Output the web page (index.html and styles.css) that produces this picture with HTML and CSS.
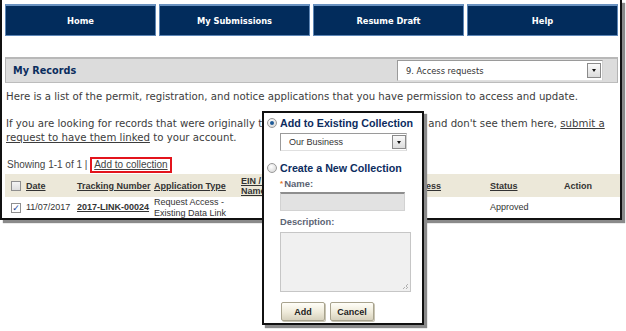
FILE: index.html
```html
<!DOCTYPE html>
<html>
<head>
<meta charset="utf-8">
<link rel="stylesheet" href="styles.css">
</head>
<body>
<div class="frame">
  <nav class="nav">
    <a class="navbtn">Home</a>
    <a class="navbtn">My Submissions</a>
    <a class="navbtn">Resume Draft</a>
    <a class="navbtn">Help</a>
  </nav>
  <div class="bar">
    <h2 class="bar-title">My Records</h2>
    <div class="select select-wide"><span class="select-text">9. Access requests</span><span class="select-arrow"><span class="tri"></span></span></div>
  </div>
  <p class="intro">Here is a list of the permit, registration, and notice applications that you have permission to access and update.</p>
  <p class="intro">If you are looking for records that were originally transferred from another owners and don't see them here, <a class="ulink">submit a</a><br><a class="ulink">request to have them linked</a> to your account.</p>
  <div class="showing">Showing 1-1 of 1 | <a class="hl">Add to collection</a></div>
  <table class="records">
    <colgroup>
      <col class="c-cb"><col class="c-date"><col class="c-track"><col class="c-app"><col class="c-ein"><col class="c-fac"><col class="c-addr"><col class="c-status"><col class="c-action">
    </colgroup>
    <thead>
      <tr>
        <th><span class="cb"></span></th>
        <th><u>Date</u></th>
        <th><u>Tracking Number</u></th>
        <th><u>Application Type</u></th>
        <th><u>EIN / Facility<br>Name</u></th>
        <th><u>Facility</u></th>
        <th><u>Address</u></th>
        <th><u>Status</u></th>
        <th>Action</th>
      </tr>
    </thead>
    <tbody>
      <tr>
        <td><span class="cb checked">&#10003;</span></td>
        <td>11/07/2017</td>
        <td><b><u>2017-LINK-00024</u></b></td>
        <td>Request Access -<br>Existing Data Link</td>
        <td></td>
        <td></td>
        <td></td>
        <td>Approved</td>
        <td></td>
      </tr>
    </tbody>
  </table>
</div>

<div class="popup">
  <div class="prow"><span class="radio on"></span><span class="plabel">Add to Existing Collection</span></div>
  <div class="select select-pop"><span class="select-text">Our Business</span><span class="select-arrow"><span class="tri"></span></span></div>
  <div class="prow prow2"><span class="radio"></span><span class="plabel">Create a New Collection</span></div>
  <div class="flabel flabel-name"><span class="req">*</span>Name:</div>
  <div class="input"></div>
  <div class="flabel flabel-desc">Description:</div>
  <div class="textarea"><span class="grip"></span></div>
  <div class="btns">
    <span class="btn">Add</span>
    <span class="btn">Cancel</span>
  </div>
</div>
</body>
</html>
```
FILE: styles.css
```css
html, body {
  margin: 0;
  padding: 0;
  background: #fff;
}
body {
  width: 626px;
  height: 331px;
  overflow: hidden;
  position: relative;
}
.frame {
  width: 618px;
  height: 218px;
  border: 2px solid #111;
  border-top: none;
  box-shadow: 3px 3px 1px #8a8a8a;
  overflow: hidden;
  font-family: "DejaVu Sans", Verdana, sans-serif;
  color: #444;
}
.nav {
  display: grid;
  grid-template-columns: repeat(4, 151px);
  column-gap: 3px;
  padding: 4px 0 0 3px;
}
.navbtn {
  height: 29px;
  background: #022c5c;
  border: 1px solid #5d86b6;
  border-top: 2px solid #6a92c0;
  color: #fff;
  font-weight: bold;
  font-size: 8.3px;
  display: flex;
  align-items: center;
  justify-content: center;
  box-sizing: content-box;
}
.bar {
  margin: 21px 2px 0 3px;
  height: 23px;
  background: #dcdcdc;
  border: 1px solid #b4b4b4;
  border-top: 2px solid #b8b8b8;
  border-bottom: 1px solid #bcbcbc;
  display: flex;
  align-items: center;
  justify-content: space-between;
  padding: 0 14px 0 7px;
}
.bar-title {
  margin: 0;
  font-size: 9.7px;
  font-weight: bold;
  color: #0b2d5d;
}
.select {
  display: flex;
  align-items: stretch;
  background: #fff;
  border: 1px solid #9a9a9a;
  border-right-color: #d0d0d0;
  border-bottom-color: #e0e0e0;
  box-sizing: border-box;
}
.select-wide {
  width: 206px;
  height: 21px;
}
.select-text {
  flex: 1;
  display: flex;
  align-items: center;
  padding-left: 8px;
  color: #333;
}
.select-wide .select-text {
  font-size: 8.3px;
}
.select-arrow {
  width: 12px;
  margin: 2px 1px 2px 0;
  border: 1px solid #8a8a8a;
  background: linear-gradient(#fafafa, #dcdcdc);
  display: flex;
  align-items: center;
  justify-content: center;
}
.tri {
  width: 0;
  height: 0;
  border-left: 2.5px solid transparent;
  border-right: 2.5px solid transparent;
  border-top: 3px solid #111;
}
.intro {
  margin: 7px 0 0 4px;
  font-size: 10.2px;
  line-height: 14px;
  white-space: nowrap;
  color: #3c3c3c;
}
.intro + .intro {
  margin-top: 13px;
}
.ulink {
  text-decoration: underline;
  color: #3c3c3c;
}
.showing {
  margin: 12px 0 0 5px;
  height: 16px;
  font-family: "Liberation Sans", Arial, sans-serif;
  font-size: 10px;
  line-height: 16px;
  color: #444;
  display: flex;
  align-items: center;
  white-space: pre;
}
.hl {
  display: inline-block;
  border: 2px solid #e3141c;
  padding: 0 2px;
  height: 12px;
  line-height: 12px;
  text-decoration: underline;
  color: #444;
}
.records {
  margin: 1px 0 0 3px;
  width: 615px;
  border-collapse: collapse;
  table-layout: fixed;
  font-family: "Liberation Sans", Arial, sans-serif;
  font-size: 9px;
  color: #333;
}
.c-cb { width: 19px; }
.c-date { width: 51px; }
.c-track { width: 77px; }
.c-app { width: 87px; }
.c-ein { width: 83px; }
.c-fac { width: 81px; }
.c-addr { width: 85px; }
.c-status { width: 74px; }
.c-action { width: 58px; }
.records th {
  background: #ece8d9;
  height: 23px;
  padding: 0 2px;
  text-align: left;
  font-weight: bold;
  line-height: 10px;
  vertical-align: middle;
  color: #333;
  white-space: nowrap;
  overflow: hidden;
}
.records th:first-child, .records td:first-child {
  padding: 0 0 0 6px;
}
.records td {
  height: 21px;
  padding: 0 2px;
  line-height: 10.5px;
  vertical-align: middle;
  white-space: nowrap;
}
.cb {
  display: block;
  width: 8px;
  height: 8px;
  border: 1px solid #8f8f8f;
  background: linear-gradient(#f4f4f4, #dedede);
  font-size: 9px;
  line-height: 8px;
  color: #1d3f93;
  text-align: center;
  font-weight: bold;
  font-family: "DejaVu Sans", sans-serif;
}
.cb.checked {
  background: #fff;
}
.popup {
  position: absolute;
  left: 262px;
  top: 111px;
  width: 162px;
  height: 214px;
  box-sizing: border-box;
  border: 2px solid #111;
  background: #fff;
  box-shadow: 3px 3px 1px #8a8a8a;
  padding: 4px 0 0 3px;
  font-family: "Liberation Sans", Arial, sans-serif;
  display: flex;
  flex-direction: column;
}
.prow {
  display: flex;
  align-items: center;
  height: 12px;
}
.prow2 {
  margin-top: 11px;
}
.radio {
  width: 8px;
  height: 8px;
  border-radius: 50%;
  border: 1px solid #9a9a9a;
  background: radial-gradient(circle at 40% 35%, #ffffff, #d0d0d0);
  margin-right: 3px;
  position: relative;
  flex: none;
}
.radio.on::after {
  content: "";
  position: absolute;
  left: 2px;
  top: 2px;
  width: 4px;
  height: 4px;
  border-radius: 50%;
  background: #1f5a96;
}
.plabel {
  font-size: 10.7px;
  font-weight: bold;
  color: #0c2c5e;
  white-space: nowrap;
}
.select-pop {
  margin: 4px 0 0 13px;
  width: 127px;
  height: 18px;
}
.select-pop .select-text {
  font-size: 9px;
}
.select-pop .select-arrow {
  margin: 1px 0 1px 0;
}
.flabel {
  font-size: 9.3px;
  font-weight: bold;
  color: #5b6473;
  line-height: 11px;
  margin-left: 13px;
}
.flabel-name {
  margin-top: 4px;
  font-size: 9.5px;
}
.req {
  color: #e8741e;
  font-size: 8px;
  vertical-align: 1px;
  margin-right: 1px;
}
.input {
  margin: 3px 0 0 13px;
  width: 125px;
  height: 19px;
  box-sizing: border-box;
  background: #e2e2e2;
  border: 1px solid #d2d2d2;
  border-top: 2px solid #8e8e8e;
}
.flabel-desc {
  margin-top: 6px;
}
.textarea {
  margin: 4px 0 0 13px;
  width: 131px;
  height: 60px;
  box-sizing: border-box;
  background: #f0f0f0;
  border: 1px solid #c6c6c6;
  position: relative;
}
.grip {
  position: absolute;
  right: 2px;
  bottom: 2px;
  width: 5px;
  height: 5px;
  background: linear-gradient(135deg, transparent 50%, #b0b0b0 50%, #b0b0b0 60%, transparent 60%, transparent 75%, #b0b0b0 75%, #b0b0b0 85%, transparent 85%);
}
.btns {
  margin: 10px 0 0 14px;
  display: flex;
  gap: 5px;
}
.btn {
  width: 44px;
  height: 19px;
  box-sizing: border-box;
  border: 1px solid #a8a38e;
  border-radius: 2px;
  background: linear-gradient(#fffef8, #eeead9 55%, #d6d1bd);
  font-size: 9px;
  font-weight: bold;
  color: #222;
  display: flex;
  align-items: center;
  justify-content: center;
  box-shadow: 1px 1px 0 #c9c5b4;
}
```
